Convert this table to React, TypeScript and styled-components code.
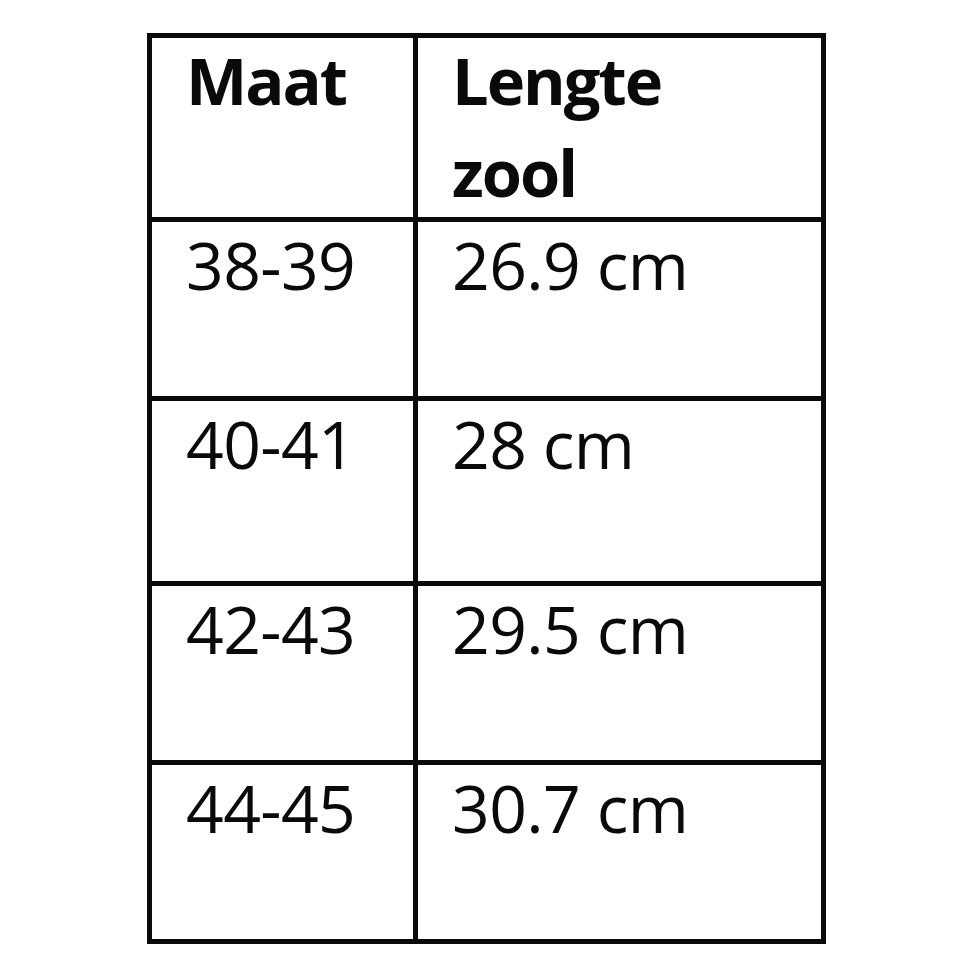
import React from "react";
import styled, {createGlobalStyle} from "styled-components";

const GlobalStyle = createGlobalStyle`
    html, body {
        margin: 0;
        padding: 0;
        background: #ffffff;
    }
`;

const Page = styled.div`
    width: 980px;
    height: 980px;
    background: #ffffff;
    padding: 33px 0 0 147px;
    box-sizing: border-box;
`;

// black grid background + gaps make the table rules
const SizeTable = styled.div`
    display: grid;
    grid-template-columns: 261px 403px;
    grid-template-rows: 179px 174px 180px 174px 174px;
    gap: 5px;
    padding: 5px;
    width: fit-content;
    background: #0a0a0a;
`;

const Cell = styled.div<{ $head?: boolean }>`
    background: #ffffff;
    padding: 0 0 0 34px;
    font-family: "Open Sans", "Liberation Sans", sans-serif;
    font-size: ${(p) => (p.$head ? "65px" : "66px")};
    line-height: 92px;
    font-weight: ${(p) => (p.$head ? 700 : 400)};
    color: #0a0a0a;
    letter-spacing: ${(p) => (p.$head ? "-2px" : "-0.6px")};
`;

const CellText = styled.div`
    margin-top: -4px;
`;

const rows = [
    ["38-39", "26.9 cm"],
    ["40-41", "28 cm"],
    ["42-43", "29.5 cm"],
    ["44-45", "30.7 cm"],
];

export default function App() {
    return (
        <>
            <GlobalStyle/>
            <Page>
                <SizeTable>
                    <Cell $head><CellText>Maat</CellText></Cell>
                    <Cell $head><CellText>Lengte<br/>zool</CellText></Cell>
                    {rows.map(([size, length]) => (
                        <React.Fragment key={size}>
                            <Cell><CellText>{size}</CellText></Cell>
                            <Cell><CellText>{length}</CellText></Cell>
                        </React.Fragment>
                    ))}
                </SizeTable>
            </Page>
        </>
    );
}
